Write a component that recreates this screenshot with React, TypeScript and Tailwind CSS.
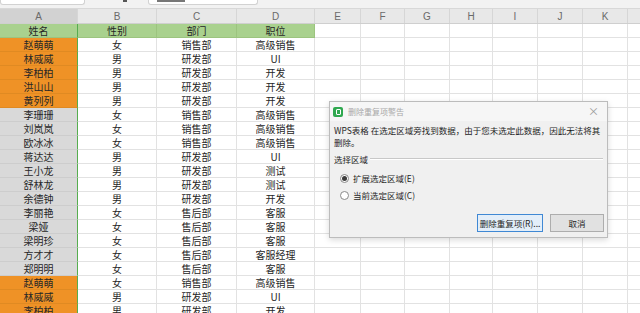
const cjk = { fontFamily: '"Noto Sans CJK SC", "Noto Sans", sans-serif' };

const colWidths = [
  "w-[78px]",
  "w-[79px]",
  "w-[80px]",
  "w-[78px]",
  "w-[46px]",
  "w-[44px]",
  "w-[45px]",
  "w-[43px]",
  "w-[45px]",
  "w-[45px]",
  "w-[45px]",
  "w-[40px]",
];
// L is scrolled past the right edge, so its letter is not shown
const letters = ["A", "B", "C", "D", "E", "F", "G", "H", "I", "J", "K", ""];

type Row = { name: string; sex: string; dept: string; job: string; hl: "orange" | "gray" };

const rows: Row[] = [
  { name: "赵萌萌", sex: "女", dept: "销售部", job: "高级销售", hl: "orange" },
  { name: "林威威", sex: "男", dept: "研发部", job: "UI", hl: "orange" },
  { name: "李柏柏", sex: "男", dept: "研发部", job: "开发", hl: "orange" },
  { name: "洪山山", sex: "男", dept: "研发部", job: "开发", hl: "orange" },
  { name: "黄列列", sex: "男", dept: "研发部", job: "开发", hl: "orange" },
  { name: "李珊珊", sex: "女", dept: "销售部", job: "高级销售", hl: "gray" },
  { name: "刘岚岚", sex: "女", dept: "销售部", job: "高级销售", hl: "gray" },
  { name: "欧冰冰", sex: "女", dept: "销售部", job: "高级销售", hl: "gray" },
  { name: "蒋达达", sex: "男", dept: "研发部", job: "UI", hl: "gray" },
  { name: "王小龙", sex: "男", dept: "研发部", job: "测试", hl: "gray" },
  { name: "舒林龙", sex: "男", dept: "研发部", job: "测试", hl: "gray" },
  { name: "余德钟", sex: "男", dept: "研发部", job: "开发", hl: "gray" },
  { name: "李丽艳", sex: "女", dept: "售后部", job: "客服", hl: "gray" },
  { name: "梁娅", sex: "女", dept: "售后部", job: "客服", hl: "gray" },
  { name: "梁明珍", sex: "女", dept: "售后部", job: "客服", hl: "gray" },
  { name: "方才才", sex: "女", dept: "售后部", job: "客服经理", hl: "gray" },
  { name: "郑明明", sex: "女", dept: "售后部", job: "客服", hl: "gray" },
  { name: "赵萌萌", sex: "女", dept: "销售部", job: "高级销售", hl: "orange" },
  { name: "林威威", sex: "男", dept: "研发部", job: "UI", hl: "orange" },
  { name: "李柏柏", sex: "男", dept: "研发部", job: "开发", hl: "orange" },
];

function DataRow({ cells, head, hl }: { cells: string[]; head?: boolean; hl?: "orange" | "gray" }) {
  return (
    <div className="flex h-[14px] shrink-0">
      {colWidths.map((w, i) => {
        let bg = "bg-white border-[#e2e2e2]";
        if (head && i < 4) bg = "bg-[#a9d18e] border-[#9cc47f]";
        else if (i === 0 && hl === "orange") bg = "bg-[#ef9226] border-[#e08a22]";
        else if (i === 0 && hl === "gray") bg = "bg-[#d9d9d9] border-[#cdcdcd]";
        return (
          <div
            key={i}
            className={`${w} shrink-0 h-full border-b border-r ${bg} ${
              i === 0 ? "border-r-[#56ad4f]" : ""
            } flex items-center justify-center text-[10px] leading-none text-[#262626]`}
          >
            {cells[i] ?? ""}
          </div>
        );
      })}
    </div>
  );
}

function Dialog() {
  return (
    <div
      className="absolute left-[329px] top-[101px] w-[279px] h-[137px] bg-[#f0f0f0] border border-[#bcbcbc] shadow-[0_2px_6px_rgba(0,0,0,0.15)] flex flex-col text-[#1e1e1e]"
      style={cjk}
    >
      <div className="h-[19px] flex items-center pl-[3px] pr-[8px] bg-[#f6f6f6]">
        <div className="w-[10px] h-[10px] rounded-[2px] bg-[#2fa84f] flex items-center justify-center">
          <div className="w-[5px] h-[6px] border border-white rounded-[1px]" />
        </div>
        <span className="ml-[5px] text-[8px] text-[#a8a8a8]">删除重复项警告</span>
        <span className="ml-auto text-[11px] leading-none text-[#9a9a9a]">×</span>
      </div>
      <p className="mt-[4px] px-[4px] text-[8.5px] leading-[11.7px]">
        WPS表格 在选定区域旁找到数据，由于您未选定此数据，因此无法将其
        <br />
        删除。
      </p>
      <div className="mt-[5px] pl-[4px] pr-[4px] flex items-center h-[12px]">
        <span className="text-[8.5px]">选择区域</span>
        <div className="flex-1 ml-[2px] border-t border-[#c8c8c8] border-b-white border-b" />
      </div>
      <div className="mt-[7px] flex items-center h-[12px] pl-[10px]">
        <div className="w-[9px] h-[9px] rounded-full border border-[#8a8a8a] bg-white flex items-center justify-center">
          <div className="w-[5px] h-[5px] rounded-full bg-[#3c3c3c]" />
        </div>
        <span className="ml-[4px] text-[8.5px]">扩展选定区域(E)</span>
      </div>
      <div className="mt-[5px] flex items-center h-[12px] pl-[10px]">
        <div className="w-[9px] h-[9px] rounded-full border border-[#8a8a8a] bg-white" />
        <span className="ml-[4px] text-[8.5px]">当前选定区域(C)</span>
      </div>
      <div className="mt-auto mb-[5px] flex justify-end gap-[7px] pr-[3px]">
        <button className="w-[66px] h-[18px] bg-[#e3eef9] border border-[#3f88d4] text-[8.5px] text-[#1e1e1e] flex items-center justify-center">
          删除重复项(R)...
        </button>
        <button className="w-[54px] h-[18px] bg-[#e1e1e1] border border-[#adadad] text-[8.5px] text-[#1e1e1e] flex items-center justify-center">
          取消
        </button>
      </div>
    </div>
  );
}

export default function App() {
  return (
    <div className="w-[640px] h-[313px] overflow-hidden relative bg-white flex flex-col" style={cjk}>
      {/* toolbar strip */}
      <div className="h-[9px] shrink-0 bg-[#f2f2f2] border-b border-[#d8d8d8] flex items-start">
        <div className="w-[85px] h-[5px] bg-white border border-t-0 border-[#d2d2d2] rounded-b-[3px]" />
        <div className="ml-[38px] w-[4px] h-[2px] bg-[#555]" />
        <div className="ml-[21px] w-[110px] h-[5px] bg-white border border-t-0 border-[#d2d2d2] rounded-b-[3px] flex items-start pl-[8px]">
          <div className="w-[28px] h-[2px] bg-[#777]" />
        </div>
      </div>
      {/* column letters */}
      <div className="flex h-[15px] shrink-0 bg-[#e8e8e8] border-b border-[#cfcfcf]">
        {colWidths.map((w, i) => (
          <div
            key={i}
            className={`${w} shrink-0 h-full flex items-center justify-center border-r border-[#d6d6d6] text-[10px] text-[#6a6a6a] ${
              i === 0 ? "bg-[#d2d2d2]" : ""
            }`}
            style={{ fontFamily: '"Liberation Sans", Arial, sans-serif' }}
          >
            {letters[i]}
          </div>
        ))}
      </div>
      <DataRow cells={["姓名", "性别", "部门", "职位"]} head />
      {rows.map((r, i) => (
        <DataRow key={i} cells={[r.name, r.sex, r.dept, r.job]} hl={r.hl} />
      ))}
      <Dialog />
    </div>
  );
}
